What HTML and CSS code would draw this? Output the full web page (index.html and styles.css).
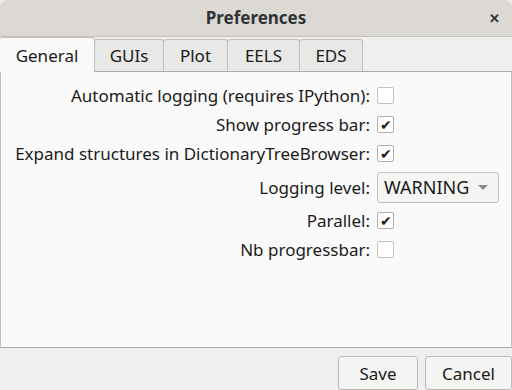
FILE: index.html
```html
<!DOCTYPE html>
<html lang="en">
<head>
    <meta charset="UTF-8">
    <title>Preferences</title>
    <link rel="stylesheet" href="styles.css">
</head>
<body>
    <div class="window">
        <div class="titlebar">
            <span class="title">Preferences</span>
            <span class="close">&#x2715;</span>
        </div>
        <div class="tabs">
            <div class="tab active">General</div>
            <div class="tab">GUIs</div>
            <div class="tab">Plot</div>
            <div class="tab">EELS</div>
            <div class="tab">EDS</div>
        </div>
        <div class="panel">
            <div class="form">
                <label>Automatic logging (requires IPython):</label>
                <span class="check"></span>

                <label>Show progress bar:</label>
                <span class="check on">&#x2714;</span>

                <label>Expand structures in DictionaryTreeBrowser:</label>
                <span class="check on">&#x2714;</span>

                <label>Logging level:</label>
                <div class="combo">WARNING <span class="arrow"></span></div>

                <label>Parallel:</label>
                <span class="check on">&#x2714;</span>

                <label>Nb progressbar:</label>
                <span class="check"></span>
            </div>
        </div>
        <div class="buttons">
            <button>Save</button>
            <button>Cancel</button>
        </div>
    </div>
</body>
</html>
```

FILE: styles.css
```css
body {
    margin: 0;
    background-color: #fff;
    font-family: 'Noto Sans', sans-serif;
    font-size: 17px;
    color: #1a1a1a;
}

.window {
    width: 512px;
    height: 390px;
    background-color: #efefef;
    display: flex;
    flex-direction: column;
    overflow: hidden;
}

.titlebar {
    height: 36px;
    background-color: #dcd9d5;
    border-radius: 7px 7px 0 0;
    border-bottom: 1px solid #c5c1bc;
    position: relative;
    display: flex;
    align-items: center;
    justify-content: center;
}

.title {
    font-weight: bold;
    font-size: 17px;
    color: #2e3436;
}

.close {
    position: absolute;
    right: 12px;
    top: 9px;
    font-size: 13px;
    font-weight: bold;
    color: #2e3436;
}

.tabs {
    display: flex;
    align-items: flex-end;
    height: 35px;
    background-color: #efefef;
}

.tab {
    height: 32px;
    box-sizing: border-box;
    padding: 0;
    display: flex;
    align-items: center;
    justify-content: center;
    background-color: #e8e8e7;
    border: 1px solid #c0bfbd;
    border-bottom: none;
    color: #1a1a1a;
    border-radius: 3px 3px 0 0;
    margin-right: -1px;
}

.tab.active {
    height: 35px;
    background-color: #fafafa;
    margin-bottom: -1px;
    position: relative;
    z-index: 1;
}

.tab:nth-child(1) { width: 95px; border-left: none; }
.tab:nth-child(2) { width: 70px; }
.tab:nth-child(3) { width: 65px; }
.tab:nth-child(4) { width: 73px; }
.tab:nth-child(5) { width: 64px; }

.panel {
    height: 279px;
    box-sizing: border-box;
    background-color: #fafafa;
    border: 1px solid #aaa9a7;
    border-left-color: #c0bfbd;
    border-right-color: #c0bfbd;
}

.form {
    display: grid;
    grid-template-columns: 1fr 122px;
    column-gap: 7px;
    row-gap: 10px;
    align-items: center;
    padding: 14px 12px 0 8px;
}

.form label {
    text-align: right;
    line-height: 19px;
    white-space: nowrap;
}

.check {
    width: 17px;
    height: 17px;
    box-sizing: border-box;
    border: 1px solid #c5c3c0;
    border-radius: 2px;
    background-color: #fff;
    font-size: 14px;
    line-height: 16px;
    text-align: center;
    color: #1a1a1a;
}

.check.on {
    border-color: #b0aeab;
}

.combo {
    height: 31px;
    box-sizing: border-box;
    border: 1px solid #c0bfbd;
    border-radius: 3px;
    background-color: #f5f5f4;
    display: flex;
    align-items: center;
    padding: 0 10px 0 6px;
    justify-content: space-between;
    font-size: 18px;
    margin: -1.5px 0;
}

.arrow {
    width: 0;
    height: 0;
    border-left: 5px solid transparent;
    border-right: 5px solid transparent;
    border-top: 5px solid #8a8a8a;
}

.buttons {
    display: flex;
    justify-content: flex-end;
    gap: 7px;
    padding: 8px 0 0;
}

button {
    font-family: 'Noto Sans', sans-serif;
    font-size: 17px;
    color: #1a1a1a;
    background-color: #f4f4f3;
    border: 1px solid #bcbab7;
    border-radius: 3px;
    height: 34px;
    padding: 0;
}

button:first-child { width: 80px; }
button:last-child { width: 87px; }
```
